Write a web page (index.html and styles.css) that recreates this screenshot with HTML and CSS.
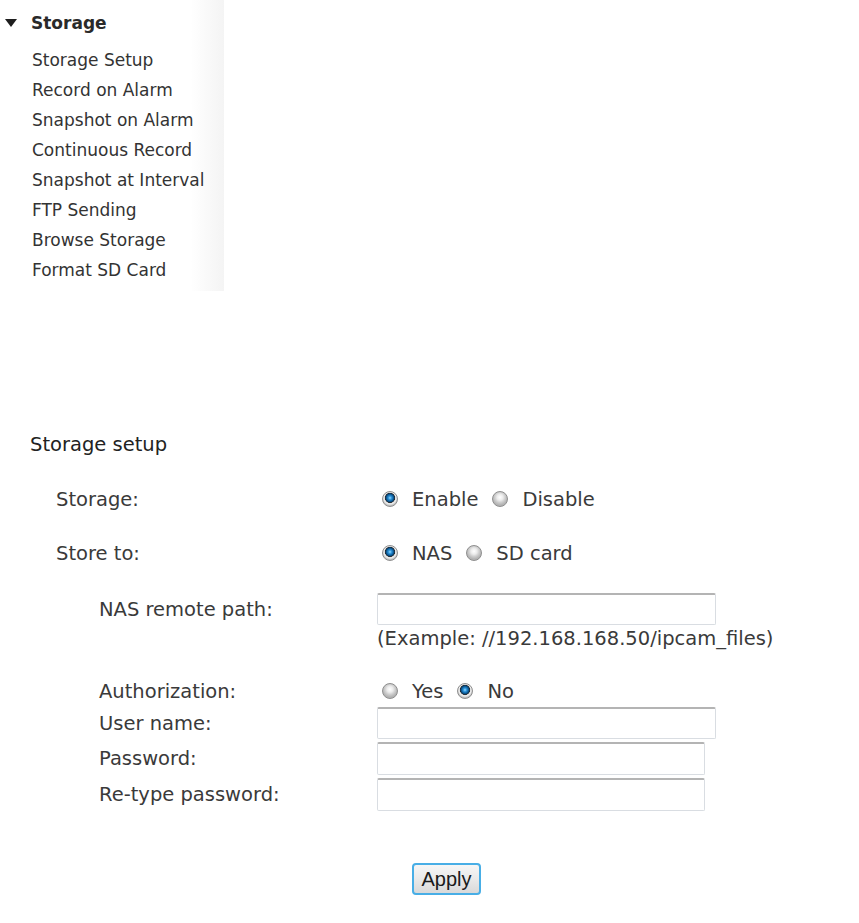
FILE: index.html
```html
<!DOCTYPE html>
<html>
<head>
<meta charset="utf-8">
<title>Storage setup</title>
<link rel="stylesheet" href="styles.css">
</head>
<body>
<nav class="sidebar">
  <div class="nav-title">
    <svg class="caret" width="12" height="8" viewBox="0 0 12 8"><polygon points="0,0 12,0 6,8" fill="#1e1e1e"/></svg>
    <span>Storage</span>
  </div>
  <ul class="nav-list">
    <li>Storage Setup</li>
    <li>Record on Alarm</li>
    <li>Snapshot on Alarm</li>
    <li>Continuous Record</li>
    <li>Snapshot at Interval</li>
    <li>FTP Sending</li>
    <li>Browse Storage</li>
    <li>Format SD Card</li>
  </ul>
</nav>

<main class="main">
  <h1 class="heading">Storage setup</h1>

  <div class="row row-storage">
    <div class="label">Storage:</div>
    <div class="control">
      <label class="opt"><input type="radio" name="st" checked><span>Enable</span></label>
      <label class="opt"><input type="radio" name="st"><span>Disable</span></label>
    </div>
  </div>

  <div class="row row-store">
    <div class="label">Store to:</div>
    <div class="control">
      <label class="opt"><input type="radio" name="to" checked><span>NAS</span></label>
      <label class="opt"><input type="radio" name="to"><span>SD card</span></label>
    </div>
  </div>

  <div class="row row-nas field-row">
    <div class="label sub">NAS remote path:</div>
    <div class="control"><input type="text" class="text wide"></div>
  </div>

  <div class="row row-example">
    <div class="label"></div>
    <div class="control example">(Example: //192.168.168.50/ipcam_files)</div>
  </div>

  <div class="row row-auth">
    <div class="label sub">Authorization:</div>
    <div class="control">
      <label class="opt"><input type="radio" name="au"><span>Yes</span></label>
      <label class="opt"><input type="radio" name="au" checked><span>No</span></label>
    </div>
  </div>

  <div class="row row-user field-row">
    <div class="label sub">User name:</div>
    <div class="control"><input type="text" class="text wide"></div>
  </div>

  <div class="row row-pass field-row">
    <div class="label sub">Password:</div>
    <div class="control"><input type="password" class="text narrow"></div>
  </div>

  <div class="row row-pass field-row">
    <div class="label sub">Re-type password:</div>
    <div class="control"><input type="password" class="text narrow"></div>
  </div>

  <div class="actions">
    <button type="button" class="apply">Apply</button>
  </div>
</main>
</body>
</html>
```

FILE: styles.css
```css
html, body {
  margin: 0;
  padding: 0;
  background: #ffffff;
}

body {
  font-family: "DejaVu Sans", Verdana, sans-serif;
  color: #3a3a3a;
}

.sidebar {
  width: 224px;
  height: 291px;
  box-sizing: border-box;
  padding-top: 8px;
  background: linear-gradient(to right, #ffffff 0, #ffffff 85%, #f4f4f4 100%);
}

.nav-title {
  display: flex;
  align-items: center;
  height: 30px;
  font-size: 17px;
  font-weight: bold;
  color: #2a2a2a;
}

.caret {
  margin-left: 5px;
  margin-right: 14px;
}

.nav-list {
  list-style: none;
  margin: 7px 0 0 0;
  padding: 0 0 0 32px;
}

.nav-list li {
  font-size: 17px;
  line-height: 30px;
  height: 30px;
  color: #333333;
  white-space: nowrap;
}

.main {
  padding-top: 142px;
}

.heading {
  margin: 0 0 0 30px;
  font-size: 19.5px;
  font-weight: normal;
  line-height: 24px;
  height: 24px;
  color: #222222;
}

.row {
  display: grid;
  grid-template-columns: 321px 1fr;
  align-items: center;
  margin-left: 56px;
  font-size: 19.5px;
}

.label {
  white-space: nowrap;
}

.label.sub {
  padding-left: 43px;
}

.control {
  display: flex;
  align-items: center;
  white-space: nowrap;
}

.row-storage { margin-top: 27px; height: 30px; }
.row-store { margin-top: 24px; height: 30px; }
.row-nas { margin-top: 25px; height: 32px; }
.row-example { height: 26px; }
.row-auth { margin-top: 25px; height: 30px; }
.row-user { margin-top: 1px; height: 32px; }
.row-pass { margin-top: 3px; height: 33px; }

.opt {
  display: inline-flex;
  align-items: center;
  margin-right: 14px;
}

.opt input[type="radio"] {
  -webkit-appearance: none;
  appearance: none;
  flex: none;
  width: 16px;
  height: 16px;
  margin: 0 14px 0 5px;
  border-radius: 50%;
  border: 1px solid #8e8e8e;
  box-sizing: border-box;
  background: radial-gradient(circle at 50% 38%, #ffffff 0, #ececec 3px, #d0d0d0 5px, #b4b4b4 7.5px);
}

.opt + .opt input[type="radio"] {
  margin-left: 0;
}

.opt input[type="radio"]:checked {
  background: radial-gradient(circle at 50% 42%, #9adcff 0, #3498dc 1.6px, #0d64a4 3.2px, #0a3c66 4.3px, #2a2a2a 4.8px, #d6d6d6 5.3px, #f2f2f2 6px, #c2c2c2 7.5px);
}

.text {
  box-sizing: border-box;
  height: 100%;
  margin: 0;
  border: 1px solid #d9dde2;
  border-top: 2px solid #b4b4b4;
  border-radius: 2px;
  background: #ffffff;
  font-size: 16px;
}

.text.wide { width: 339px; }
.text.narrow { width: 328px; }

.row-nas .text, .row-user .text { height: 32px; }
.row-pass .text { height: 33px; }

.example {
  color: #3a3a3a;
}

.actions {
  margin-top: 52px;
  padding-left: 412px;
}

.apply {
  width: 69px;
  height: 32px;
  margin: 0;
  padding: 0;
  border: 2px solid #48aee6;
  border-radius: 4px;
  background: linear-gradient(to bottom, #f6f6f6 0, #e9e9e9 50%, #d9d9d9 100%);
  font-family: "Liberation Sans", Arial, sans-serif;
  font-size: 20px;
  color: #1a1a1a;
}
```
